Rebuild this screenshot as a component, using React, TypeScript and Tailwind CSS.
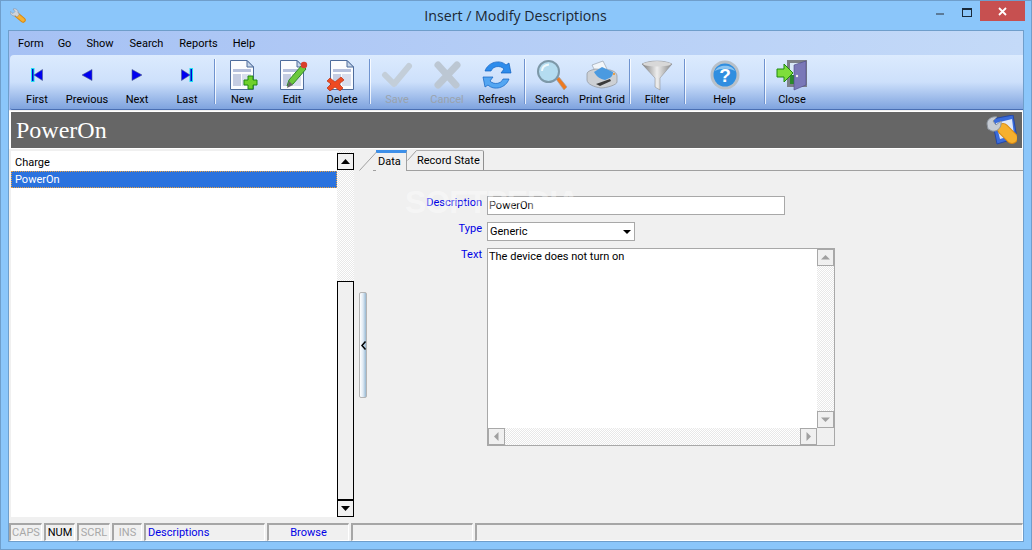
import React from "react";

const Nav = ({ kind }: { kind: "first" | "prev" | "next" | "last" }) => {
  const left = kind === "first" || kind === "prev";
  const bar = kind === "first" || kind === "last";
  return (
    <svg width="14" height="14" viewBox="0 0 14 14">
      <g transform={left ? undefined : "translate(14,0) scale(-1,1)"}>
        {bar && <rect x="1.500" y="0.500" width="2.500" height="13" fill="#0000d0" stroke="#18e0f0" strokeWidth="1" />}
        <path d={bar ? "M12.500 1.500V12.500L4 7Z" : "M12 1.500V12.500L2 7Z"} fill="#0000f0" stroke="#50608a" strokeWidth="0.600" />
      </g>
    </svg>
  );
};

const Doc = ({ children }: { children?: React.ReactNode }) => (
  <svg width="32" height="32" viewBox="0 0 32 32">
    <path d="M4.500 1.500H21L27.500 8V30.500H4.500Z" fill="#fbfcfe" stroke="#4e6c9c" />
    <path d="M21 1.500V8H27.500Z" fill="#c6d6ea" stroke="#4e6c9c" />
    <rect x="7" y="10" width="18" height="3" fill="#b6c0dc" />
    <rect x="7" y="15" width="8" height="12" fill="#c4cce2" />
    <rect x="16" y="15" width="9" height="12" fill="#d8deee" />
    {children}
  </svg>
);

const Tool = ({ icon, label, off, w = "w-[50px]" }: { icon: React.ReactNode; label: string; off?: boolean; w?: string }) => (
  <div className={`${w} h-full flex flex-col items-center shrink-0`}>
    <div className="h-[38px] flex items-center justify-center pb-[1px] pt-[3px]">{icon}</div>
    <span className={`whitespace-nowrap leading-[14px] ${off ? "text-[#9aa3ad]" : "text-black"}`}>{label}</span>
  </div>
);

const Sep = () => (
  <div className="w-[5px] shrink-0 flex justify-center pt-[4px] pb-[5px]">
    <div className="w-[2px] h-full border-l border-[#6f93cf] bg-white/80" />
  </div>
);

const Dither = "bg-[repeating-conic-gradient(#e8e8e8_0_25%,#ffffff_0_50%)] bg-[length:2px_2px]";

const Wrench = () => (
  <svg width="16" height="16" viewBox="0 0 16 16">
    <path d="M7 7L13 12" stroke="#d98a12" strokeWidth="5.500" strokeLinecap="round" />
    <path d="M7 7L13 12" stroke="#f5b030" strokeWidth="3.500" strokeLinecap="round" />
    <path d="M0.500 3.500 3 5.500 5 3.500 3 1C6 0 8.500 2 8 4.800L9.500 6 7 9 5.500 7.800C2.500 8.500 0 6.500 0.500 3.500Z" fill="#d0d4da" stroke="#808a98" strokeWidth=".5" />
  </svg>
);

const ScrollBtn = ({ up }: { up?: boolean }) => (
  <div className="w-[17px] h-[17px] shrink-0 border border-black bg-[#f0f0f0] flex items-center justify-center">
    <svg width="9" height="5" viewBox="0 0 9 5">
      <path d={up ? "M0 5H9L4.500 0Z" : "M0 0H9L4.500 5Z"} fill="#000" />
    </svg>
  </div>
);

const GrayBtn = ({ d }: { d: string }) => (
  <div className="w-[17px] h-[17px] shrink-0 border border-[#a8a8a8] bg-[#f0f0f0] flex items-center justify-center">
    <svg width="9" height="9" viewBox="0 0 9 9"><path d={d} fill="#a0a0a0" /></svg>
  </div>
);

const Status = ({ w, children, cls = "" }: { w: string; children?: React.ReactNode; cls?: string }) => (
  <div className={`${w} ${cls} h-[18px] shrink-0 border-t-2 border-l-2 border-[#a6a6a6] border-r border-r-white border-b border-b-white leading-[16px] whitespace-nowrap`}>
    {children}
  </div>
);

export default function App() {
  return (
    <div className="w-[1032px] h-[550px] flex flex-col bg-[#8bc6fa] border border-[#6f9ecb] overflow-hidden font-['Roboto',sans-serif] text-[11px] text-black">
      {/* title bar */}
      <div className="h-[29px] shrink-0 flex items-start">
        <div className="ml-[9px] mt-[7px]"><Wrench /></div>
        <div className="flex-1 text-center mt-[5px] text-[14.200px] leading-[20px] text-[#1b2733] font-['Open_Sans',sans-serif] pl-[69px]">Insert / Modify Descriptions</div>
        <div className="flex items-start">
          <div className="w-[8px] h-[2px] bg-[#5b7a98] mt-[12px] mr-[18px]" />
          <div className="w-[10px] h-[9px] border border-[#1a2a3a] border-t-2 mt-[7px] mr-[8px]" />
          <div className="w-[45px] h-[20px] bg-[#c75050] flex items-center justify-center mr-[6px]">
            <svg width="9" height="9" viewBox="0 0 9 9"><path d="M1 1L8 8M8 1L1 8" stroke="#fff" strokeWidth="1.800" /></svg>
          </div>
        </div>
      </div>

      {/* client */}
      <div className="flex-1 mx-[7px] mb-[7px] flex flex-col bg-[#f0f0f0] border border-[#6f9ecb] min-h-0">
        {/* menu */}
        <div className="h-[24px] shrink-0 flex items-center gap-[15px] pl-[9px] pt-[2px] bg-gradient-to-r from-[#a6c1f4] to-[#c4daf8]">
          <span>Form</span>
          <span className="-ml-[1px]">Go</span>
          <span>Show</span>
          <span className="ml-[1px]">Search</span>
          <span className="ml-[1px]">Reports</span>
          <span>Help</span>
        </div>
        {/* toolbar */}
        <div className="h-[55px] shrink-0 bg-[#a6c1f4]">
          <div className="h-full ml-[1px] rounded-tl-[4px] rounded-bl-[2px] flex pl-[2px] border-b border-[#4a6fb3] bg-gradient-to-b from-[#dcebfe] via-[#cde0fb] to-[#7fa3de]">
            <Tool label="First" icon={<Nav kind="first" />} />
            <Tool label="Previous" icon={<Nav kind="prev" />} />
            <Tool label="Next" icon={<Nav kind="next" />} />
            <Tool label="Last" icon={<Nav kind="last" />} />
            <Sep />
            <Tool label="New" icon={<Doc><path d="M22 17h5v4h4v5h-4v4h-5v-4h-4v-5h4Z" fill="#6fd02a" stroke="#1f8a10" /></Doc>} />
            <Tool label="Edit" icon={<Doc><path d="M11 27L13 21L26 6L30 10L17 25Z" fill="#6cc83c" stroke="#2f8a2a" /><circle cx="28" cy="6" r="3.200" fill="#d8402c" /><path d="M11 29L13 22L17 26Z" fill="#666" /></Doc>} />
            <Tool label="Delete" icon={<Doc><path d="M1 22L4 19L9 23L15 18L18 21L13 25L17 29L14 32L9 28L4 32L1 29L5 25Z" fill="#ee4a22" stroke="#b83010" strokeWidth=".7" /></Doc>} />
            <Sep />
            <Tool off label="Save" icon={<svg width="32" height="30" viewBox="0 0 32 30"><path d="M4 15L13 24L28 6" fill="none" stroke="#c3ced9" strokeWidth="6" strokeLinecap="round" strokeLinejoin="round" /></svg>} />
            <Tool off label="Cancel" icon={<svg width="32" height="30" viewBox="0 0 32 30"><path d="M7 5L25 25M26 5L7 25" fill="none" stroke="#bcc7d3" strokeWidth="7" strokeLinecap="round" /></svg>} />
            <Tool label="Refresh" icon={
              <svg width="32" height="32" viewBox="0 0 32 32">
                <path d="M4 12C7 3 19 0 25 6L28 4L30 14L20 14L23 10C19 6 12 7 10 12Z" fill="#2d8cec" stroke="#1060c0" strokeWidth=".7" />
                <path d="M28 20C25 29 13 32 7 26L4 28L2 18L12 18L9 22C13 26 20 25 22 20Z" fill="#54a6f2" stroke="#1060c0" strokeWidth=".7" />
              </svg>} />
            <Sep />
            <Tool label="Search" icon={
              <svg width="32" height="32" viewBox="0 0 32 32">
                <path d="M20 20L23 18L31 28L28 31Z" fill="#ef7a20" stroke="#a0a0a0" strokeWidth=".7" />
                <circle cx="12.500" cy="12.500" r="10.500" fill="#b4dcf0" stroke="#7d98a8" strokeWidth="2" />
                <path d="M6 12C6 8 9 6 13 5.500" stroke="#eef8fc" strokeWidth="2" fill="none" />
              </svg>} />
            <Tool label="Print Grid" icon={
              <svg width="32" height="32" viewBox="0 0 32 32">
                <path d="M6 6L17 2L21 10L10 14Z" fill="#f2f6fa" stroke="#9aa4b0" strokeWidth=".7" />
                <path d="M1 15C1 12 6 11 9 10L24 11C28 12 31 14 31 17V23C31 26 20 29 15 29C8 28 1 25 1 21Z" fill="#cdd0d4" stroke="#8c929a" strokeWidth=".7" />
                <path d="M8 13L16 8L27 13C27 18 24 19 19 21C14 20 11 18 8 13Z" fill="#4a9ae0" />
                <circle cx="28" cy="15" r="1" fill="#f09020" />
                <path d="M10 25L24 20L25 22L14 27Z" fill="#3a3a3a" />
              </svg>} />
            <Sep />
            <Tool label="Filter" icon={
              <svg width="32" height="32" viewBox="0 0 32 32">
                <defs><linearGradient id="fg" x1="0" x2="1"><stop offset="0" stopColor="#777" /><stop offset=".5" stopColor="#eee" /><stop offset="1" stopColor="#888" /></linearGradient></defs>
                <path d="M1 5C8 1 24 1 31 5L19 19V31L14 28V19Z" fill="url(#fg)" stroke="#888" strokeWidth=".5" />
                <ellipse cx="16" cy="5" rx="14" ry="2.500" fill="#d8d8d8" />
              </svg>} />
            <Sep />
            <Tool w="w-[75px]" label="Help" icon={
              <svg width="30" height="30" viewBox="0 0 30 30">
                <circle cx="15" cy="15" r="14.500" fill="#b8c0c8" />
                <circle cx="15" cy="15" r="11.500" fill="#2f8ee0" />
                <path d="M5 11C8 4 22 4 25 11C20 8 10 8 5 11Z" fill="#8cc4f0" />
                <text x="15" y="21.500" textAnchor="middle" fontSize="19" fontWeight="bold" fontFamily="Liberation Sans" fill="#fff">?</text>
              </svg>} />
            <Sep />
            <Tool label="Close" icon={
              <svg width="32" height="32" viewBox="0 0 32 32">
                <rect x="11" y="1" width="20" height="27" fill="#7c8088" />
                <rect x="14" y="4" width="10" height="20" fill="#d8e8f8" />
                <rect x="14" y="16" width="10" height="9" fill="#2a8a2a" />
                <path d="M18 6L30 2V26L18 31Z" fill="#7a78b8" stroke="#4a4888" strokeWidth=".6" />
                <circle cx="21" cy="17" r="1.200" fill="#eee" />
                <path d="M1 10H8V5L17 14L8 23V18H1Z" fill="#7ede3a" stroke="#1f8a10" />
              </svg>} />
          </div>
        </div>
        {/* header */}
        <div className="h-[38px] shrink-0 mt-[1px] border border-white border-l-2 bg-[#666666] flex items-center justify-between pl-[5px] pr-[5px] font-['Liberation_Serif',serif] text-[24px] text-white">
          <span className="leading-[28px]">PowerOn</span>
          <svg width="32" height="30" viewBox="0 0 32 30">
            <path d="M7 4L28 0L32 23L12 29Z" fill="#3a6cdc" stroke="#2448a8" />
            <path d="M11 8L27 4L29 20L15 24Z" fill="#dfe8f8" />
            <path d="M18 14L27 23" stroke="#d98a12" strokeWidth="12" strokeLinecap="round" />
            <path d="M18 14L27 23" stroke="#f6b02e" strokeWidth="10" strokeLinecap="round" />
            <path d="M2 9C2 4 7 1 12 2L8 6L11 10L16 6C17 12 13 17 7 16L3 14Z" fill="#c6ccd4" stroke="#8c949e" />
          </svg>
        </div>
        {/* body */}
        <div className="flex-1 flex min-h-0">
          {/* list */}
          <div className="w-[346px] shrink-0 flex pt-[2px] pb-[4px] pl-[2px]">
            <div className="w-[326px] bg-white pt-[5px]">
              <div className="pl-[4px] h-[15px] leading-[13px]">Charge</div>
              <div className="pl-[3px] h-[17px] leading-[15px] bg-[#2a72de] text-white border border-dotted border-[#e8a040]">PowerOn</div>
            </div>
            <div className={`w-[17px] shrink-0 flex flex-col pt-[2px] ${Dither}`}>
              <ScrollBtn up />
              <div className="flex-1" />
              <div className="h-[219px] shrink-0 border border-black bg-[#f0f0f0]" />
              <ScrollBtn />
            </div>
          </div>
          {/* splitter */}
          <div className="w-[18px] shrink-0 flex items-center pl-[4px] pt-[20px]">
            <div className="w-[8px] h-[106px] rounded-[2px] bg-gradient-to-r from-[#ffffff] via-[#dfeaf4] to-[#97b8d2] border border-[#b4b4b4] flex items-center">
              <svg width="6" height="9" viewBox="0 0 6 9" className="shrink-0 ml-px"><path d="M4.500 0.500L1 4.500L4.500 8.500" fill="none" stroke="#000" strokeWidth="1.500" /></svg>
            </div>
          </div>
          {/* right */}
          <div className="flex-1 flex flex-col min-w-0 relative">
            <div className="h-[22px] shrink-0 flex items-end border-b border-[#a0a0a0] relative">
              <svg width="18" height="20" viewBox="0 0 18 20" className="absolute left-[-14px] top-[2px]"><path d="M0.500 19.500L17.500 1" stroke="#a0a0a0" fill="none" /></svg>
              <div className="w-[31px] h-[21px] ml-[3px] border-t-[3px] border-t-[#3d8fe8] border-r border-r-[#a0a0a0] pl-[2px] leading-[18px] bg-[#f0f0f0] -mb-px">Data</div>
              <div className="w-[77px] h-[20px] border-t border-t-[#b0b0b0] border-r border-r-[#909090] pl-[10px] leading-[20px] bg-[#f0f0f0] rounded-tr-[2px] relative">
                Record State
                <svg width="11" height="11" viewBox="0 0 11 11" className="absolute left-0 top-[-1px]"><path d="M0 0H10L0 11Z" fill="#f0f0f0" /><path d="M0.500 10.500L9.500 0.500" stroke="#a0a0a0" fill="none" /></svg>
              </div>
            </div>
            <div className="flex-1 pt-[25px] pl-[40px] flex flex-col gap-[7px] text-[#0000e6]">
              <div className="flex gap-[5px] items-start">
                <div className="w-[69px] text-right leading-[14px]">Description</div>
                <div className="w-[298px] h-[19px] border border-[#a8a8a8] bg-white text-black pl-[1px] leading-[18px]">PowerOn</div>
              </div>
              <div className="flex gap-[5px] items-start">
                <div className="w-[69px] text-right leading-[14px]">Type</div>
                <div className="w-[148px] h-[19px] border border-[#a8a8a8] bg-white text-black pl-[2px] leading-[18px] flex justify-between">
                  <span>Generic</span>
                  <span className="w-[15px] flex items-center justify-center">
                    <svg width="8" height="4" viewBox="0 0 8 4"><path d="M0 0H8L4 4Z" fill="#000" /></svg>
                  </span>
                </div>
              </div>
              <div className="flex gap-[5px] items-start">
                <div className="w-[69px] text-right leading-[14px]">Text</div>
                <div className="w-[348px] h-[198px] border border-[#a8a8a8] bg-white flex flex-col">
                  <div className="flex-1 flex min-h-0">
                    <div className="flex-1 text-black pl-[1px] pt-[1px] leading-[14px]">The device does not turn on</div>
                    <div className={`w-[17px] flex flex-col justify-between ${Dither}`}>
                      <GrayBtn d="M0 6.500H9L4.500 2Z" />
                      <GrayBtn d="M0 2.500H9L4.500 7Z" />
                    </div>
                  </div>
                  <div className={`h-[17px] shrink-0 flex ${Dither}`}>
                    <GrayBtn d="M6.500 0V9L2 4.500Z" />
                    <div className="flex-1" />
                    <GrayBtn d="M2.500 0V9L7 4.500Z" />
                    <div className="w-[17px] h-[17px] bg-[#f0f0f0]" />
                  </div>
                </div>
              </div>
            </div>
            <div className="absolute left-[32px] top-[37px] text-[32px] font-bold leading-[32px] tracking-[-1px] text-white/40 font-['Liberation_Sans',sans-serif] pointer-events-none">SOFTPEDIA</div>
          </div>
        </div>
        {/* status */}
        <div className="h-[20px] shrink-0 flex gap-[2px] items-end">
          <Status w="w-[33px]" cls="text-center text-[#a8a8a8]">CAPS</Status>
          <Status w="w-[31px]" cls="text-center">NUM</Status>
          <Status w="w-[33px]" cls="text-center text-[#a8a8a8]">SCRL</Status>
          <Status w="w-[30px]" cls="text-center text-[#a8a8a8]">INS</Status>
          <Status w="w-[121px]" cls="pl-[2px] text-[#0000e6]">Descriptions</Status>
          <Status w="w-[82px]" cls="text-center text-[#0000e6]">Browse</Status>
          <Status w="w-[122px]" />
          <Status w="flex-1" />
        </div>
      </div>
    </div>
  );
}
